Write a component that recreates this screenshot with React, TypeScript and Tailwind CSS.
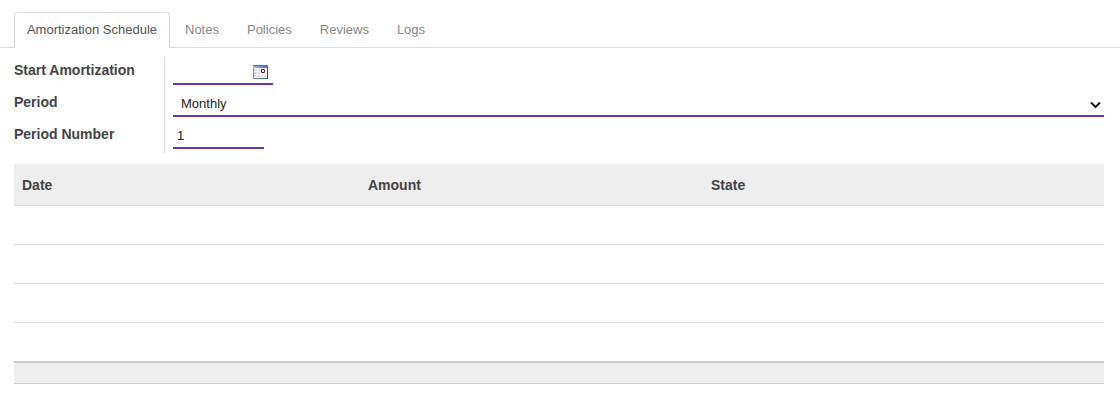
const inactiveTabs = ["Notes", "Policies", "Reviews", "Logs"];

function CalendarIcon() {
  return (
    <svg width="15" height="14" viewBox="0 0 15 14" shapeRendering="crispEdges" aria-label="Calendar">
      <defs>
        <linearGradient id="calendar-bar" x1="0" x2="1" y1="0" y2="0">
          <stop offset="0" stopColor="#a3c0f0" />
          <stop offset="1" stopColor="#3a6acb" />
        </linearGradient>
        <linearGradient id="calendar-frame" x1="0" x2="1" y1="0" y2="0">
          <stop offset="0" stopColor="#7d92b8" />
          <stop offset="1" stopColor="#2f4c84" />
        </linearGradient>
      </defs>
      <rect width="15" height="14" fill="url(#calendar-frame)" />
      <rect x="1" y="3" width="13" height="10" fill="#fff" />
      <rect x="0" y="0" width="15" height="3" fill="url(#calendar-bar)" />
      <rect x="0" y="0" width="15" height="1" fill="#4a72c4" />
      <path d="M1 4h3v2H1zM5 4h2v2H5zM1 7h3v2H1zM5 7h2v2H5zM1 10h3v2H1zM5 10h2v2H5zM8 10h2v2H8zM11 10h2v2h-2z" fill="#dadada" />
      <path d="M9 4h2v1H9zM9 7h2v1H9zM8 5h1v2H8zM11 5h1v2h-1z" fill="#8b0010" />
      <path d="M8 4h1v1H8zM11 4h1v1h-1zM8 7h1v1H8zM11 7h1v1h-1z" fill="#b35b64" />
    </svg>
  );
}

export default function App() {
  return (
    <div className="h-[403px] w-full bg-[#fefefe] pt-3 font-['Liberation_Sans',sans-serif] text-[#444]">
      <nav className="flex h-9 border-b border-[#ddd] pl-3.5 text-[13px] leading-[18px]">
        <button className="-mb-px h-9 w-[156px] rounded-t-[4px] border border-b-0 border-[#ddd] bg-[#fefefe] pb-px text-[#555]">
          Amortization Schedule
        </button>
        <div className="flex gap-7 pt-[9px] pl-[15px] text-[#888]">
          {inactiveTabs.map((tab) => (
            <button key={tab} className="h-[18px]">{tab}</button>
          ))}
        </div>
      </nav>
      <main className="pt-[9px] pr-4 pl-3.5">
        <div className="flex h-24">
          <div className="w-[151px] border-r border-[#ddd] text-sm leading-[26px] font-bold">
            <div className="h-8">Start Amortization</div>
            <div className="h-8">Period</div>
            <div className="h-8">Period Number</div>
          </div>
          <div className="flex-1 pl-2 text-[13px] text-[#1f1f1f]">
            <div className="flex h-7 w-[100px] justify-end border-b-2 border-[#673ab7] pt-2 pr-[5px]">
              <CalendarIcon />
            </div>
            <div className="mt-1 flex h-7 items-center justify-between border-b-2 border-[#673ab7] pt-[3px] pr-[3px] pl-2">
              <span>Monthly</span>
              <svg className="mt-[3px]" width="11" height="8" viewBox="0 0 11 8" fill="none">
                <path d="M1 1.5 5.5 6 10 1.5" stroke="#1f1f1f" strokeWidth="2" />
              </svg>
            </div>
            <div className="mt-1 flex h-7 w-[91px] items-center border-b-2 border-[#673ab7] pt-[3px] pl-1">1</div>
          </div>
        </div>
        <table className="mt-[11px] w-full table-fixed border-separate border-spacing-0 text-left text-sm">
          <colgroup>
            <col className="w-[346px]" />
            <col className="w-[343px]" />
            <col />
          </colgroup>
          <thead>
            <tr className="h-[42px] bg-[#eee]">
              <th className="border-b border-[#ddd] px-2 py-0 font-bold">Date</th>
              <th className="border-b border-[#ddd] px-2 py-0 font-bold">Amount</th>
              <th className="border-b border-[#ddd] px-2 py-0 font-bold">State</th>
            </tr>
          </thead>
          <tbody>
            <tr className="h-[39px]"><td colSpan={3} className="border-b border-[#ddd] p-0" /></tr>
            <tr className="h-[39px]"><td colSpan={3} className="border-b border-[#ddd] p-0" /></tr>
            <tr className="h-[39px]"><td colSpan={3} className="border-b border-[#ddd] p-0" /></tr>
            <tr className="h-[38px]"><td colSpan={3} className="p-0" /></tr>
          </tbody>
          <tfoot>
            <tr className="h-[23px] bg-[#eee]"><td colSpan={3} className="border-t-2 border-b border-[#cacaca] p-0" /></tr>
          </tfoot>
        </table>
      </main>
    </div>
  );
}
